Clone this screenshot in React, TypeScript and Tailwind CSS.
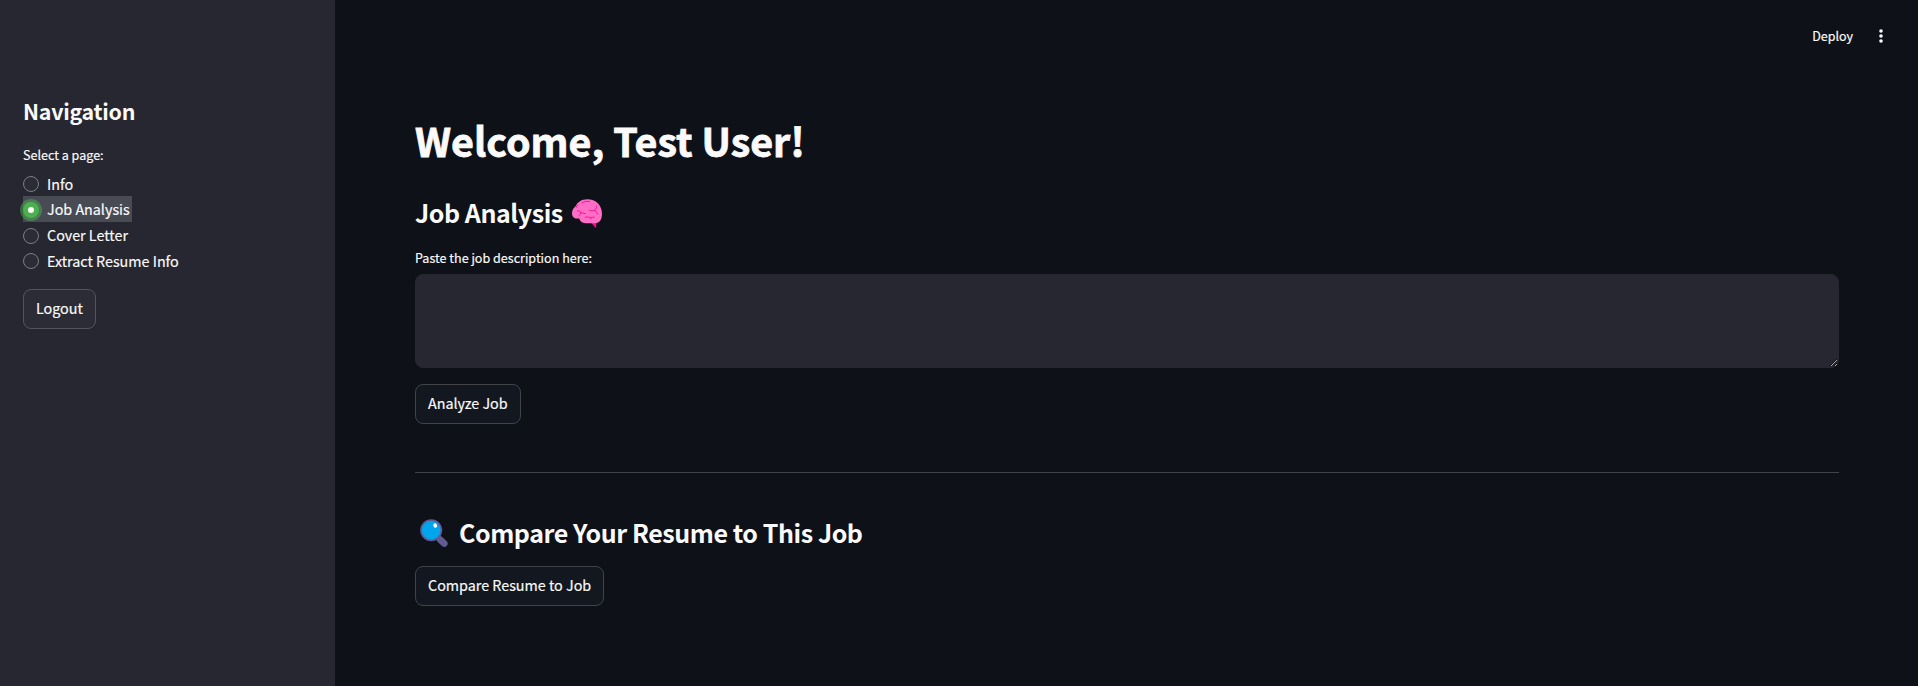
import React from "react";

const pages = [
  { name: "Info", text: "pt-px", width: "w-[26px]", dot: "mt-[6px]" },
  { name: "Job Analysis", text: "", width: "w-[83px]", dot: "mt-[6px]" },
  { name: "Cover Letter", text: "", width: "w-[81px]", dot: "mt-[6px]" },
  { name: "Extract Resume Info", text: "", width: "w-[132px]", dot: "mt-[5px]" },
];

function Brain() {
  return (
    <svg className="mt-[8px] ml-[9px] block" width="30" height="29" viewBox="0 0 30 29" fill="none">
      <path d="M19 23.5h5.2v4.6c0 .7-.6.8-1 .4z" fill="#f70a8d" />
      <path d="M15.2.2C9.600.2 5.500 3 3.800 7 1.400 8.700 0 11.500 0 14.400c0 3.500 2.600 5.200 6 5.200h1.300c.8 2.900 3 4.600 6.200 4.600h9.700c4.200 0 6.800-3.500 6.800-9.400C30 6.200 24 .2 15.200.2Z" fill="#ff6dc6" />
      <path d="M10 3.800c2.400-1.500 4.800-1.800 7.600-1.200M4 8.500c.4-1.200 1-2 2-2.800M5.600 11.700c1.600-.4 2.800.6 3 2.200.2 1.200-.6 2.200-1.600 2.700M8.600 13.500l4.800 1.200M24.800 7c0 2.300-1.200 3.800-3.400 4.600-1.800.6-3.200.3-4.400-.4M21.600 11.500c2.500.1 3.600 1.600 3.800 3.600M13.200 18.300c2.500-1.300 3.800.5 5.600.2 1.200-.3 2.500-.6 3.600-.2M18.200 19.700l1.400-1.200" stroke="#f01a96" strokeWidth="1" strokeLinecap="round" />
    </svg>
  );
}

function Magnifier() {
  return (
    <svg className="mt-[8px] mr-[10px] ml-[5px] block" width="29" height="29" viewBox="0 0 29 29">
      <path d="M16.500 17.500l3.500 3.500" stroke="#533566" strokeWidth="2.400" />
      <path d="M20 20.500l4.300 4" stroke="#635994" strokeWidth="6.600" strokeLinecap="round" />
      <circle cx="11.200" cy="11.200" r="10.200" fill="#00a6ed" stroke="#635994" strokeWidth="1.700" />
      <ellipse cx="15.200" cy="6.500" rx="1.800" ry="2.200" transform="rotate(-30 15.200 6.500)" fill="#fff" />
    </svg>
  );
}

function Button({ children, className }: { children: React.ReactNode; className: string }) {
  return (
    <button className={`flex h-10 items-center rounded-lg border pb-[2px] pl-3 text-[14.32px] leading-[24px] whitespace-nowrap ${className}`}>
      {children}
    </button>
  );
}

export default function App() {
  return (
    <div className="flex h-[686px] w-full overflow-hidden bg-[#0e1117] font-['Noto_Sans_CJK_SC','Noto_Sans',sans-serif] text-[#fafafa] [-webkit-text-stroke:0.18px_#fafafa]">
      <aside className="h-full w-[335px] shrink-0 bg-[#262730] pl-[23px]">
        <h2 className="mt-[93px] h-[36px] text-[21.4px] leading-[36px] font-bold tracking-[-0.25px] whitespace-nowrap [-webkit-text-stroke:0]">Navigation</h2>
        <p className="mt-[16px] h-5 text-[12.55px] leading-5">Select a page:</p>
        <div className="mt-[5px]">
          {pages.map((page) => {
            const active = page.name === "Job Analysis";
            return (
              <label key={page.name} className={`flex h-[26px] w-fit items-start ${active ? "bg-[#484a54] pr-[2px]" : ""}`}>
                <span
                  className={`size-4 shrink-0 rounded-full ${page.dot} ${
                    active
                      ? "flex items-center justify-center bg-[#4caf50] ring-3 ring-[#4caf50]/50"
                      : "border border-[#7d7e84] bg-[#2b2c36]"
                  }`}
                >
                  {active && <span className="size-[6px] rounded-full bg-[#fafafa]" />}
                </span>
                <span className={`ml-2 text-[14.32px] leading-[26px] whitespace-nowrap ${page.text} ${page.width}`}>{page.name}</span>
              </label>
            );
          })}
        </div>
        <Button className="mt-[15px] w-[73px] border-[#53545c] bg-[#2b2c36]">Logout</Button>
      </aside>
      <main className="flex min-w-0 flex-1 flex-col">
        <header className="flex h-[72px] items-center justify-end pr-[34px]">
          <span className="text-[12.5px] leading-5">Deploy</span>
          <svg className="ml-[25px]" width="6" height="16" viewBox="0 0 6 16" fill="#fafafa">
            <circle cx="3" cy="3" r="1.800" />
            <circle cx="3" cy="8" r="1.800" />
            <circle cx="3" cy="13" r="1.800" />
          </svg>
        </header>
        <div className="w-[1504px] pl-[80px]">
          <h1 className="mt-[42px] h-[52px] text-[39.4px] leading-[52px] font-bold whitespace-nowrap [-webkit-text-stroke:0.8px_#fafafa]">Welcome, Test User!</h1>
          <h2 className="mt-[25px] flex h-[42px] text-[25px] leading-[42px] font-bold tracking-[-0.44px] whitespace-nowrap [-webkit-text-stroke:0]">
            Job Analysis
            <Brain />
          </h2>
          <p className="mt-[15px] h-5 text-[12.55px] leading-5">Paste the job description here:</p>
          <textarea className="mt-[6px] block h-[94px] w-[1424px] resize rounded-lg border border-[#262730] bg-[#262730] outline-none" />
          <Button className="mt-4 w-[106px] border-[#414349] bg-[#13171f]">Analyze Job</Button>
          <hr className="mt-[48px] border-[#414349]" />
          <h2 className="mt-[38px] flex h-[42px] text-[25px] leading-[42px] font-bold tracking-[-0.44px] whitespace-nowrap [-webkit-text-stroke:0]">
            <Magnifier />
            Compare Your Resume to This Job
          </h2>
          <Button className="mt-[13px] w-[189px] border-[#414349] bg-[#13171f]">Compare Resume to Job</Button>
        </div>
      </main>
    </div>
  );
}
